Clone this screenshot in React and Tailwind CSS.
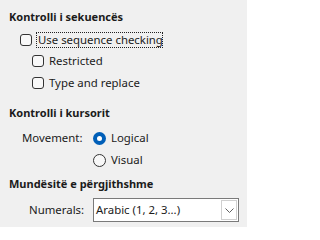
import React from "react";

function Check() {
  return (
    <span className="w-[12px] h-[12px] rounded-[3px] border border-[#333] bg-[#f8f8f8] shrink-0" />
  );
}

function Radio({ on }) {
  if (on)
    return (
      <span className="w-[13px] h-[13px] rounded-full bg-[#005fb8] flex items-center justify-center shrink-0">
        <span className="w-[5px] h-[5px] rounded-full bg-white" />
      </span>
    );
  return <span className="w-[13px] h-[13px] rounded-full border border-[#333] bg-[#f8f8f8] shrink-0" />;
}

export default function App() {
  return (
    <div
      className="w-[247px] h-[227px] bg-[#f0f0f0] text-[#1b1b1b] text-[11.4px] overflow-hidden flex flex-col pt-[9px] whitespace-nowrap"
      style={{ fontFamily: '"Noto Sans", sans-serif' }}
    >
      <div className="pl-[9px] h-[16px] leading-[16px] font-bold text-[11px]">Kontrolli i sekuencës</div>
      <div className="flex items-center h-[21px] mt-[4px] pl-[20px] gap-[4px]">
        <Check />
        <span className="border border-dotted border-[#222] h-[16px] leading-[14px] pl-[1px] w-[127px]">Use sequence checking</span>
      </div>
      <div className="flex items-center h-[21px] pl-[32px] gap-[5px]">
        <Check />
        <span>Restricted</span>
      </div>
      <div className="flex items-center h-[23px] pl-[32px] gap-[5px]">
        <Check />
        <span>Type and replace</span>
      </div>
      <div className="pl-[9px] h-[16px] leading-[16px] font-bold text-[11px] mt-[11px]">Kontrolli i kursorit</div>
      <div className="flex mt-[6px] pl-[22px]">
        <div className="w-[71px] h-[22px] leading-[22px]">Movement:</div>
        <div className="flex flex-col">
          <div className="flex items-center h-[22px] gap-[5px]">
            <Radio on />
            <span>Logical</span>
          </div>
          <div className="flex items-center h-[22px] gap-[5px]">
            <Radio />
            <span>Visual</span>
          </div>
        </div>
      </div>
      <div className="pl-[9px] h-[16px] leading-[16px] font-bold text-[11px] mt-[5px]">Mundësitë e përgjithshme</div>
      <div className="flex items-center mt-[6px] pl-[29px]">
        <div className="w-[64px]">Numerals:</div>
        <div className="w-[146px] h-[24px] border border-[#7a7a7a] bg-white flex items-center pl-[2px] pr-[1px]">
          <span className="flex-1">Arabic (1, 2, 3...)</span>
          <span className="w-[16px] h-[20px] border border-[#d0d0d0] flex items-center justify-center">
            <svg width="9" height="5" viewBox="0 0 9 5">
              <path d="M0.5 0.5 L4.5 4.5 L8.5 0.5" fill="none" stroke="#606060" strokeWidth="1" />
            </svg>
          </span>
        </div>
      </div>
    </div>
  );
}
